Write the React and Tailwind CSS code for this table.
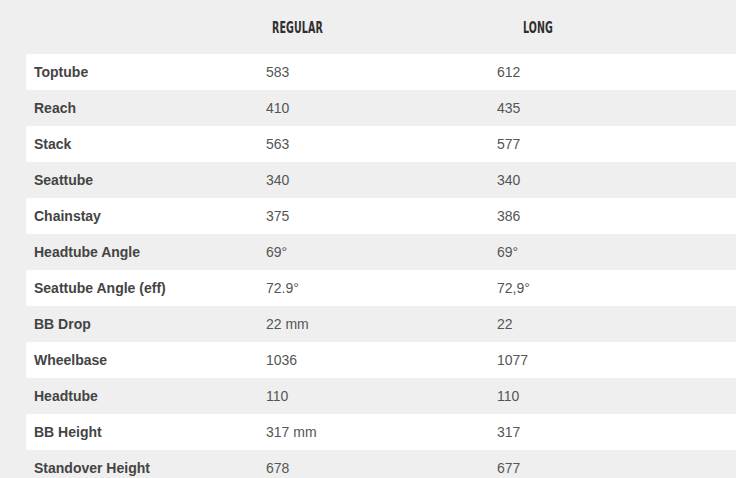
import React from "react";

const rows = [
  ["Toptube", "583", "612"],
  ["Reach", "410", "435"],
  ["Stack", "563", "577"],
  ["Seattube", "340", "340"],
  ["Chainstay", "375", "386"],
  ["Headtube Angle", "69°", "69°"],
  ["Seattube Angle (eff)", "72.9°", "72,9°"],
  ["BB Drop", "22 mm", "22"],
  ["Wheelbase", "1036", "1077"],
  ["Headtube", "110", "110"],
  ["BB Height", "317 mm", "317"],
  ["Standover Height", "678", "677"],
];

export default function App() {
  return (
    <div className="w-[736px] h-[478px] overflow-hidden bg-[#efefef] pl-[26px] font-['Liberation_Sans',Arial,sans-serif] text-[14px]">
      <div className="flex h-[54px] items-center">
        <div className="w-[232px]" />
        <div className="w-[231px] pl-[14px] pt-[1px]">
          <span className="inline-block origin-left scale-x-[0.66] font-['DejaVu_Sans_Condensed',sans-serif] text-[16px] font-bold tracking-[0.2px] text-[#2f2f2f]">
            REGULAR
          </span>
        </div>
        <div className="flex-1 pl-[34px] pt-[1px]">
          <span className="inline-block origin-left scale-x-[0.66] font-['DejaVu_Sans_Condensed',sans-serif] text-[16px] font-bold tracking-[0.2px] text-[#2f2f2f]">
            LONG
          </span>
        </div>
      </div>
      {rows.map((r, i) => (
        <div
          key={r[0]}
          className={`flex h-[36px] items-center pt-[1px] ${i % 2 === 0 ? "bg-white" : "bg-[#efefef]"}`}
        >
          <div className="w-[232px] pl-[8px] font-bold text-[#444]">{r[0]}</div>
          <div className="w-[231px] pl-[8px] text-[#555]">{r[1]}</div>
          <div className="flex-1 pl-[8px] text-[#555]">{r[2]}</div>
        </div>
      ))}
    </div>
  );
}
